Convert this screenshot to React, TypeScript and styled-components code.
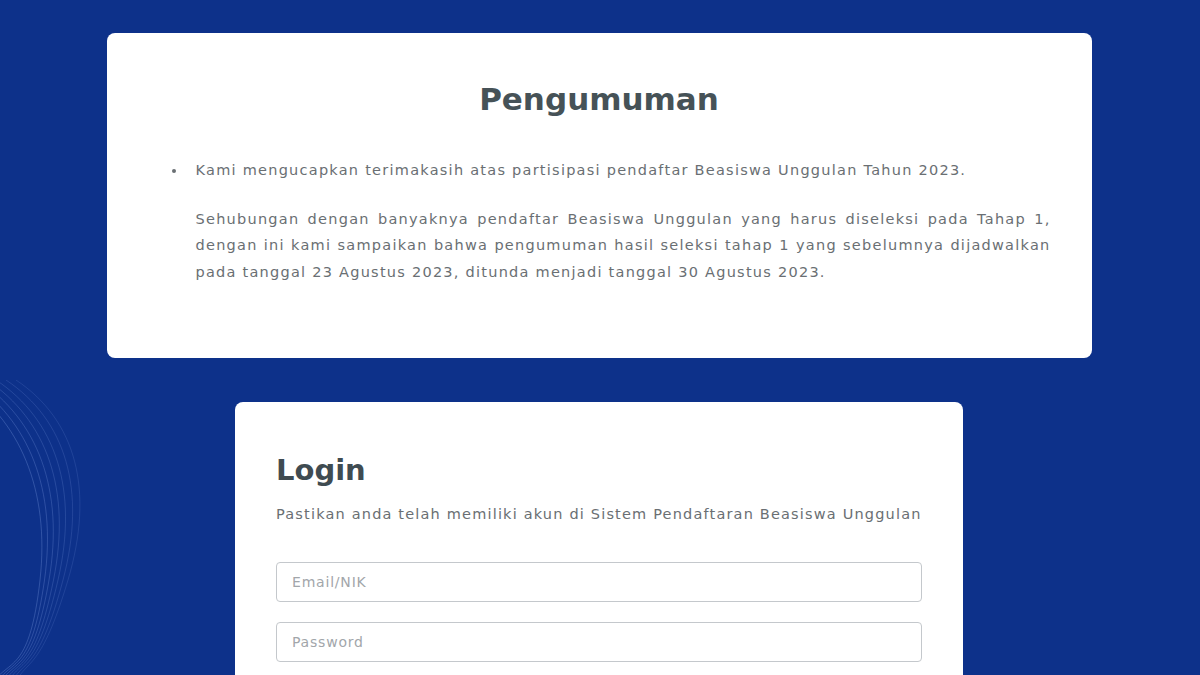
import styled, { createGlobalStyle } from 'styled-components'

const GlobalStyle = createGlobalStyle`
  html, body {
    margin: 0;
    padding: 0;
    background: #0d318a;
  }
  body {
    font-family: 'DejaVu Sans', 'Liberation Sans', sans-serif;
    overflow: hidden;
  }
`

const Page = styled.main`
  position: relative;
  min-height: 675px;
  background: #0d318a;
  display: flex;
  flex-direction: column;
  align-items: center;
  padding: 33px 2px 0 0;
  gap: 44px;
  box-sizing: border-box;
  overflow: hidden;
`

const Waves = styled.svg`
  position: absolute;
  left: 0;
  top: 380px;
  width: 120px;
  height: 300px;
  pointer-events: none;
`

const Card = styled.section<{ $width: number }>`
  width: ${(p) => p.$width}px;
  background: #fff;
  border-radius: 8px;
  box-sizing: border-box;
  position: relative;
  z-index: 1;
`

const NoticeCard = styled(Card)`
  height: 325px;
  padding: 48px 41px 0;
`

const NoticeTitle = styled.h1`
  margin: 0 0 40px;
  text-align: center;
  font-size: 31px;
  font-weight: 700;
  color: #465257;
  line-height: 36px;
`

const BulletList = styled.ul`
  margin: 0 0 0 24px;
  padding: 0;
  list-style: none;
  color: #6a6f73;
  font-size: 14.5px;
  letter-spacing: 1.25px;
  line-height: 26.5px;
`

const BulletItem = styled.li`
  display: grid;
  grid-template-columns: 24px 1fr;
`

const Dot = styled.span`
  width: 4px;
  height: 4px;
  border-radius: 50%;
  background: #6a6f73;
  margin-top: 12px;
`

const Paragraph = styled.p`
  margin: 22px 0 0;
  text-align: justify;
`

const LoginCard = styled(Card)`
  height: 300px;
  padding: 50px 41px 0;
`

const LoginTitle = styled.h2`
  margin: 0;
  font-size: 29px;
  font-weight: 700;
  color: #3f4b51;
  line-height: 36px;
`

const Subtitle = styled.p`
  margin: 15px 0 37px;
  font-size: 14.5px;
  letter-spacing: 1.18px;
  color: #6a6f73;
  line-height: 22px;
`

const Form = styled.form`
  display: flex;
  flex-direction: column;
  gap: 20px;
`

const Field = styled.input`
  height: 40px;
  box-sizing: border-box;
  border: 1px solid #c4c8cc;
  border-radius: 4px;
  padding: 0 15px;
  font-family: inherit;
  font-size: 14px;
  letter-spacing: 0.8px;
  color: #444;
  background: #fff;
  outline: none;

  &::placeholder {
    color: #a2a6aa;
  }
`

export default function App() {
  return (
    <>
      <GlobalStyle />
      <Page>
        <Waves viewBox="0 0 120 300" fill="none" stroke="#7d9ae0" strokeWidth="1">
          {[0, 9, 18, 27, 36, 46, 56].map((o, i) => (
            <path
              key={i}
              d={`M${-40 + o} 0 C ${20 + o} 40, ${50 + o * 0.8} 110, ${40 + o * 0.5} 200 S ${10 + o * 0.3} 280, ${-5 + o * 0.4} 300`}
              opacity={0.32 - i * 0.025}
            />
          ))}
        </Waves>

        <NoticeCard $width={985}>
          <NoticeTitle>Pengumuman</NoticeTitle>
          <BulletList>
            <BulletItem>
              <Dot />
              <div>
                Kami mengucapkan terimakasih atas partisipasi pendaftar Beasiswa Unggulan Tahun 2023.
                <Paragraph>
                  Sehubungan dengan banyaknya pendaftar Beasiswa Unggulan yang harus diseleksi pada
                  Tahap 1, dengan ini kami sampaikan bahwa pengumuman hasil seleksi tahap 1 yang
                  sebelumnya dijadwalkan pada tanggal 23 Agustus 2023, ditunda menjadi tanggal 30
                  Agustus 2023.
                </Paragraph>
              </div>
            </BulletItem>
          </BulletList>
        </NoticeCard>

        <LoginCard $width={728}>
          <LoginTitle>Login</LoginTitle>
          <Subtitle>Pastikan anda telah memiliki akun di Sistem Pendaftaran Beasiswa Unggulan</Subtitle>
          <Form onSubmit={(e) => e.preventDefault()}>
            <Field type="text" placeholder="Email/NIK" />
            <Field type="password" placeholder="Password" />
          </Form>
        </LoginCard>
      </Page>
    </>
  )
}
